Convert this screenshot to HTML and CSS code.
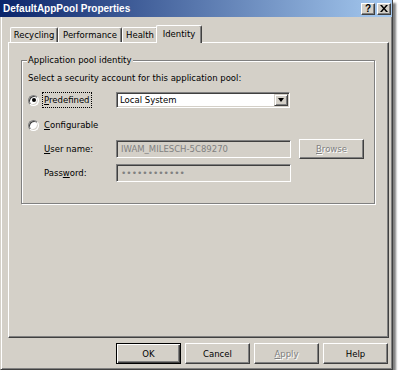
FILE: index.html
```html
<!DOCTYPE html>
<html lang="en">
<head>
    <meta charset="UTF-8">
    <title>DefaultAppPool Properties</title>
    <link rel="stylesheet" href="styles.css">
</head>
<body>
    <div class="window">
        <div class="titlebar">
            <span class="title">DefaultAppPool Properties</span>
            <div class="caption-buttons">
                <span class="cap-btn help">?</span>
                <span class="cap-btn close">
                    <svg width="8" height="7" viewBox="0 0 8 7"><path d="M0 0h2l2 2.5 2-2.5h2L5 3.5 8 7H6L4 4.5 2 7H0l3-3.5z" fill="#000"/></svg>
                </span>
            </div>
        </div>

        <div class="content">
            <div class="tabs">
                <div class="tab w-recycling">Recycling</div>
                <div class="tab w-performance">Performance</div>
                <div class="tab w-health">Health</div>
                <div class="tab active">Identity</div>
            </div>

            <div class="panel">
                <div class="group">
                    <span class="legend">Application pool identity</span>
                    <p class="hint">Select a security account for this application pool:</p>

                    <div class="row row-predefined">
                        <label class="radio-label">
                            <span class="radio checked"></span>
                            <span class="focus"><u>P</u>redefined</span>
                        </label>
                        <div class="combo">
                            <span class="combo-text">Local System</span>
                            <span class="combo-btn"><span class="arrow"></span></span>
                        </div>
                    </div>

                    <div class="row row-config">
                        <label class="radio-label">
                            <span class="radio"></span>
                            <span class="plain"><u>C</u>onfigurable</span>
                        </label>
                    </div>

                    <div class="field row-user">
                        <span class="field-label"><u>U</u>ser name:</span>
                        <div class="edit">IWAM_MILESCH-5C89270</div>
                        <button class="btn browse disabled"><u>B</u>rowse</button>
                    </div>

                    <div class="field row-pass">
                        <span class="field-label">Pass<u>w</u>ord:</span>
                        <div class="edit dots">&bull;&bull;&bull;&bull;&bull;&bull;&bull;&bull;&bull;&bull;&bull;&bull;</div>
                    </div>
                </div>
            </div>

            <div class="buttons">
                <button class="btn default">OK</button>
                <button class="btn">Cancel</button>
                <button class="btn disabled"><u>A</u>pply</button>
                <button class="btn">Help</button>
            </div>
        </div>
    </div>
</body>
</html>
```

FILE: styles.css
```css
body {
    margin: 0;
    background-color: #fff;
    font-family: "DejaVu Sans", Verdana, sans-serif;
    font-size: 8.5px;
    color: #000;
}

.window {
    width: 393px;
    height: 370px;
    box-sizing: border-box;
    background-color: #d4d0c8;
    border-left: 1px solid #d4d0c8;
    border-right: 1px solid #404040;
    border-bottom: 1px solid #404040;
    box-shadow: inset 1px 0 #fff, inset -1px -1px #808080, 3px 3px 2px rgba(0, 0, 0, 0.5);
}

/* title bar */
.titlebar {
    height: 17px;
    display: flex;
    align-items: center;
    justify-content: space-between;
    margin-left: -1px;
    padding-left: 3px;
    padding-right: 1px;
    background: linear-gradient(to right, #0a246a, #a6caf0);
}

.title {
    color: #fff;
    font-family: "Liberation Sans", Arial, sans-serif;
    font-weight: bold;
    font-size: 10px;
}

.caption-buttons {
    display: flex;
    gap: 2px;
}

.cap-btn {
    width: 14px;
    height: 12px;
    box-sizing: border-box;
    display: flex;
    align-items: center;
    justify-content: center;
    background-color: #d4d0c8;
    border: 1px solid;
    border-color: #fff #404040 #404040 #fff;
    box-shadow: inset -1px -1px #808080;
    font-family: "Liberation Sans", Arial, sans-serif;
    font-weight: bold;
    font-size: 10px;
    line-height: 1;
}

/* content */
.content {
    padding-top: 8px;
}

.tabs {
    display: flex;
    height: 17px;
    margin-left: 9px;
    position: relative;
    z-index: 1;
}

.tab {
    margin-top: 2px;
    height: 15px;
    box-sizing: border-box;
    display: flex;
    align-items: center;
    justify-content: center;
    border: 1px solid;
    border-bottom: none;
    border-color: #fff #404040 #fff #fff;
    border-radius: 2px 2px 0 0;
    box-shadow: inset -1px 0 #808080;
    background-color: #d4d0c8;
}

.w-recycling { width: 48px; }
.w-performance { width: 64px; }
.w-health { width: 36px; }

.tab.active {
    width: 46px;
    margin: 0 -2px 0 -2px;
    height: 18px;
    padding-bottom: 2px;
    position: relative;
    z-index: 2;
}

.panel {
    margin-left: 7px;
    width: 381px;
    height: 296px;
    box-sizing: border-box;
    border: 1px solid;
    border-color: #fff #404040 #404040 #fff;
    box-shadow: inset -1px -1px #808080;
    padding: 17px 0 0 12px;
}

/* group box */
.group {
    position: relative;
    width: 354px;
    height: 144px;
    box-sizing: border-box;
    border: 1px solid #808080;
    box-shadow: inset 1px 1px #fff, 1px 1px #fff;
    padding: 11px 0 0 6px;
}

.legend {
    position: absolute;
    left: 5px;
    top: -7px;
    padding: 0 1px;
    line-height: 13px;
    background-color: #d4d0c8;
}

.hint {
    margin: 0;
    line-height: 13px;
}

.row {
    display: flex;
    align-items: center;
    height: 16px;
}

.row-predefined { margin-top: 7px; }
.row-config { margin-top: 9px; }

.radio-label {
    display: flex;
    align-items: center;
    width: 88px;
}

.radio {
    width: 11px;
    height: 11px;
    box-sizing: border-box;
    border-radius: 50%;
    border: 1px solid;
    border-color: #808080 #fff #fff #808080;
    box-shadow: inset 1px 1px #404040, inset -1px -1px #d4d0c8;
    background-color: #fff;
    position: relative;
    margin-right: 3px;
}

.radio.checked::after {
    content: "";
    position: absolute;
    left: 2.5px;
    top: 2.5px;
    width: 4px;
    height: 4px;
    border-radius: 50%;
    background-color: #000;
}

.focus {
    border: 1px dotted #000;
    padding: 1px 1px;
    line-height: 12px;
}

.plain {
    padding-left: 2px;
}

.combo {
    width: 174px;
    height: 16px;
    box-sizing: border-box;
    display: flex;
    align-items: center;
    justify-content: space-between;
    background-color: #fff;
    border: 1px solid;
    border-color: #808080 #fff #fff #808080;
    box-shadow: inset 1px 1px #404040, inset -1px -1px #d4d0c8;
    padding: 1px 1px 1px 3px;
}

.combo-btn {
    width: 14px;
    height: 12px;
    box-sizing: border-box;
    display: flex;
    align-items: center;
    justify-content: center;
    background-color: #d4d0c8;
    border: 1px solid;
    border-color: #d4d0c8 #404040 #404040 #d4d0c8;
    box-shadow: inset 1px 1px #fff, inset -1px -1px #808080;
}

.arrow {
    width: 0;
    height: 0;
    border-left: 3.5px solid transparent;
    border-right: 3.5px solid transparent;
    border-top: 4px solid #000;
}

/* user / password fields */
.field {
    display: flex;
    align-items: center;
    height: 21px;
}

.row-user { margin-top: 5px; }
.row-pass { margin-top: 3px; }

.field-label {
    width: 72px;
    margin-left: 16px;
}

.edit {
    width: 175px;
    height: 18px;
    box-sizing: border-box;
    display: flex;
    align-items: center;
    padding-left: 4px;
    color: #808080;
    border: 1px solid;
    border-color: #808080 #fff #fff #808080;
    box-shadow: inset 1px 1px #404040, inset -1px -1px #d4d0c8;
}

.dots {
    font-family: "Liberation Sans", Arial, sans-serif;
    font-size: 9.5px;
    letter-spacing: 2px;
    padding-left: 5px;
}

/* push buttons */
.btn {
    width: 65px;
    height: 21px;
    box-sizing: border-box;
    font-family: inherit;
    font-size: inherit;
    color: #000;
    background-color: #d4d0c8;
    border: 1px solid;
    border-color: #fff #404040 #404040 #fff;
    box-shadow: inset -1px -1px #808080;
    padding: 0;
}

.btn.browse {
    margin-left: 8px;
    height: 20px;
}

.btn.disabled {
    color: #808080;
    text-shadow: 1px 1px #fff;
}

.btn.default {
    border-color: #000;
    box-shadow: inset 1px 1px #fff, inset -1px -1px #404040, inset -2px -2px #808080;
}

.buttons {
    display: flex;
    justify-content: flex-end;
    gap: 4px;
    margin-top: 5px;
    padding-right: 4px;
}
```
